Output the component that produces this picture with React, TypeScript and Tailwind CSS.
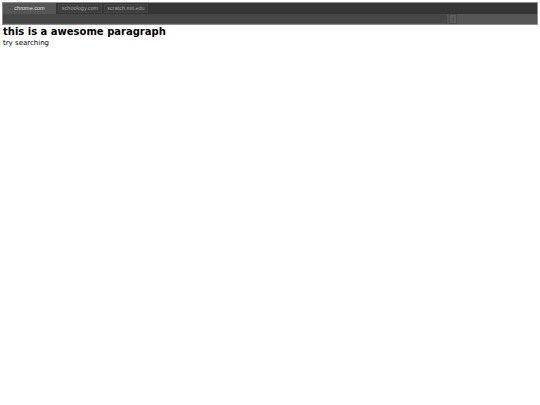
export default function App() {
  return (
    <div className="w-[540px] h-[405px] bg-white" style={{ fontFamily: '"DejaVu Sans", sans-serif' }}>
      <div className="ml-[2px] mt-[2px] w-[536px] border border-[#8c8c8c] bg-[#353535]">
        <div className="flex h-[11px] items-start gap-[2px]">
          <div className="flex h-[11px] w-[53px] items-center justify-center bg-[#555555] text-[5.5px] text-[#e0e0e0]" style={{ fontFamily: '"Liberation Sans", Arial, sans-serif' }}>
            chrome.com
          </div>
          <div className="mt-[1px] flex h-[9px] w-[44px] items-center justify-center border border-[#444] bg-[#3d3d3d] text-[5.5px] text-[#a0a0a0]" style={{ fontFamily: '"Liberation Sans", Arial, sans-serif' }}>
            schoology.com
          </div>
          <div className="mt-[1px] flex h-[9px] w-[44px] items-center justify-center border border-[#444] bg-[#3d3d3d] text-[5.5px] text-[#a0a0a0]" style={{ fontFamily: '"Liberation Sans", Arial, sans-serif' }}>
            scratch.mit.edu
          </div>
        </div>
        <div className="flex h-[10px] items-stretch bg-[#555555]">
          <div className="w-[444px] bg-[#474747] border-b border-[#505050]"></div>
          <div className="ml-[2px] flex w-[8px] items-center justify-center border border-[#4a4a4a] bg-[#5e5e5e] text-[6px] leading-none text-[#222]">|</div>
        </div>
      </div>
      <h1 className="ml-[3px] mt-[1px] text-[10px] font-bold leading-[12px] text-black">this is a awesome paragraph</h1>
      <p className="ml-[3px] mt-[1px] text-[7px] leading-[8px] text-black">try searching</p>
    </div>
  );
}
